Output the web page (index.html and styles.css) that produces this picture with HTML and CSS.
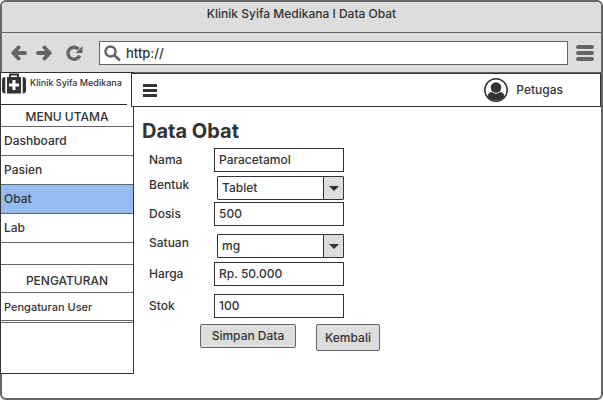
FILE: index.html
```html
<!DOCTYPE html>
<html lang="id">
<head>
<meta charset="utf-8">
<title>Klinik Syifa Medikana I Data Obat</title>
<link rel="stylesheet" href="styles.css">
</head>
<body>
<div class="browser">
  <header class="titlebar">Klinik Syifa Medikana I Data Obat</header>
  <div class="toolbar">
    <button class="tool" aria-label="Back"><svg width="16" height="16" viewBox="0 0 16 16"><path d="M7.500 2.500 2.500 8l5 5.500M3 8h11" fill="none" stroke="#666" stroke-width="4" stroke-linecap="round" stroke-linejoin="miter"/></svg></button>
    <button class="tool forward" aria-label="Forward"><svg width="16" height="16" viewBox="0 0 16 16"><path d="m8.500 2.500 5 5.500-5 5.500M13 8H2" fill="none" stroke="#666" stroke-width="4" stroke-linecap="round" stroke-linejoin="miter"/></svg></button>
    <button class="tool reload" aria-label="Reload"><svg width="17" height="16" viewBox="0 0 17 16"><path d="M12.500 4.200A6 6 0 1 0 13.600 10.500" fill="none" stroke="#666" stroke-width="3.400"/><path d="M16.500 1v7h-7z" fill="#666"/></svg></button>
    <div class="address">
      <svg width="17" height="16" viewBox="0 0 17 16"><circle cx="6.500" cy="6.500" r="5" fill="none" stroke="#666" stroke-width="2.500"/><path d="m10.500 10.500 4.500 4" stroke="#666" stroke-width="3" stroke-linecap="round"/></svg>
      <input type="text" value="http://" aria-label="Address">
    </div>
    <button class="tool" aria-label="Browser menu"><svg width="18" height="18" viewBox="0 0 18 18"><path d="M2 3h14M2 9h14M2 15h14" stroke="#666" stroke-width="4" stroke-linecap="round"/></svg></button>
  </div>
  <div class="page">
    <aside class="sidebar">
      <div class="brand">
        <svg width="24" height="22" viewBox="0 0 24 22"><path d="M8 5V1.500h8V5" fill="none" stroke="#333" stroke-width="2"/><path d="M5 4h14v16.500H5zM3.300 4v16.500H3a3 3 0 0 1-3-3V7a3 3 0 0 1 3-3zM20.700 4v16.500h.3a3 3 0 0 0 3-3V7a3 3 0 0 0-3-3z" fill="#333"/><path d="M10.500 7h3v3.500H17v3h-3.500V17h-3v-3.500H7v-3h3.500z" fill="#fff"/></svg>
        <span>Klinik Syifa Medikana</span>
      </div>
      <nav>
        <h2>MENU UTAMA</h2>
        <a href="#">Dashboard</a>
        <a href="#">Pasien</a>
        <a href="#" class="active">Obat</a>
        <a href="#">Lab</a>
        <div class="spacer"></div>
        <h2 class="settings">PENGATURAN</h2>
        <a href="#" class="user-settings">Pengaturan User</a>
      </nav>
    </aside>
    <main>
      <div class="topbar">
        <button class="tool" aria-label="Menu"><svg width="14" height="13" viewBox="0 0 14 13"><path d="M0 1.500h14M0 6.500h14M0 11.500h14" stroke="#333" stroke-width="3"/></svg></button>
        <div class="account">
          <svg width="24" height="24" viewBox="0 0 24 24"><circle cx="12" cy="12" r="11.200" fill="#fff" stroke="#333" stroke-width="1.500"/><circle cx="12" cy="9.500" r="5.300" fill="#333"/><path d="M3.500 18.500c.5-3 2-4.500 4.500-4.500 2.500 2.200 5.500 2.200 8 0 2.500 0 4 1.500 4.500 4.500A11 11 0 0 1 3.500 18.500z" fill="#333"/></svg>
          <span>Petugas</span>
        </div>
      </div>
      <form>
        <h1>Data Obat</h1>
        <div class="fields">
          <label for="nama">Nama</label>
          <input id="nama" type="text" value="Paracetamol">
          <label for="bentuk" class="raised">Bentuk</label>
          <div class="select"><select id="bentuk"><option>Tablet</option></select></div>
          <label for="dosis">Dosis</label>
          <input id="dosis" type="text" value="500">
          <label for="satuan" class="raised">Satuan</label>
          <div class="select"><select id="satuan"><option>mg</option></select></div>
          <label for="harga">Harga</label>
          <input id="harga" type="text" value="Rp. 50.000">
          <label for="stok">Stok</label>
          <input id="stok" type="text" value="100">
        </div>
        <div class="actions">
          <button type="button" class="save">Simpan Data</button>
          <button type="button" class="back">Kembali</button>
        </div>
      </form>
    </main>
  </div>
</div>
</body>
</html>
```
FILE: styles.css
```css
* {
  box-sizing: border-box;
}

body {
  margin: 0;
  color: #333;
  font: 500 12px/16px Inter, "Open Sans", sans-serif;
}

button, input, select {
  margin: 0;
  color: inherit;
  font: inherit;
}

svg {
  display: block;
  flex: none;
}

.browser {
  display: flex;
  flex-direction: column;
  min-height: 100vh;
  border: 2px solid #666;
  border-radius: 6px;
  background: #fff;
}

.titlebar {
  height: 31px;
  padding-top: 4px;
  border-bottom: 1px solid #666;
  border-radius: 4px 4px 0 0;
  background: #ddd;
  text-align: center;
}

.toolbar {
  display: flex;
  align-items: center;
  height: 40px;
  padding: 0 7px 0 9px;
  border-bottom: 1px solid #666;
  background: #ddd;
}

.tool {
  padding: 0;
  border: 0;
  background: none;
}

.forward {
  margin-left: 9px;
}

.reload {
  margin-left: 14px;
}

.address {
  display: flex;
  flex: 1;
  align-items: center;
  gap: 5px;
  height: 24px;
  margin: 0 8px 0 16px;
  padding: 0 4px;
  border: 1px solid #666;
  background: #fff;
}

.address input {
  flex: 1;
  min-width: 0;
  padding: 0;
  border: 0;
  background: none;
  font-size: 13px;
}

.page {
  display: flex;
  align-items: flex-start;
  margin: -1px 0 0 -2px;
}

.sidebar {
  width: 134px;
  min-height: 302px;
  flex: none;
  border: 1px solid #333;
  background: #fff;
}

.brand {
  display: flex;
  gap: 4px;
  height: 32px;
  margin-right: 6px;
  padding-left: 1px;
  border-bottom: 1px solid #333;
  font-size: 9px;
  line-height: 20px;
  white-space: nowrap;
}

.sidebar h2 {
  height: 22px;
  margin: 0;
  border-bottom: 1px solid #666;
  font-size: 12px;
  font-weight: 500;
  line-height: 24px;
  text-align: center;
}

.sidebar a {
  display: block;
  height: 29px;
  padding-left: 3px;
  border-bottom: 1px solid #666;
  color: inherit;
  line-height: 28px;
  text-decoration: none;
}

.sidebar .active {
  background: #94bbf2;
}

.spacer {
  height: 22px;
  border-bottom: 1px solid #666;
}

.sidebar .settings {
  height: 28px;
  line-height: 31px;
}

.sidebar .user-settings {
  height: 30px;
  border-bottom: 3px double #666;
  font-size: 11px;
}

main {
  flex: 1;
  min-width: 0;
}

.topbar {
  display: flex;
  align-items: center;
  justify-content: space-between;
  height: 34px;
  margin: 1px 0 0 -3px;
  padding: 0 37px 0 11px;
  border: 1px solid #333;
  background: #fff;
}

.account {
  display: flex;
  align-items: center;
  gap: 8px;
}

form {
  padding: 12px 8px 0;
}

h1 {
  margin: 0 0 5px;
  font-size: 20px;
  font-weight: 700;
  line-height: 24px;
}

.fields {
  display: grid;
  grid-template-columns: 65px 130px;
  grid-template-rows: 28px 26px 32px 28px 32px 24px;
  align-items: start;
  padding-left: 7px;
}

.fields label {
  line-height: 24px;
}

.fields .raised {
  line-height: 18px;
}

.fields input {
  width: 100%;
  height: 24px;
  padding: 0 4px 2px;
  border: 1px solid #333;
  background: #fff;
}

.select {
  position: relative;
  margin-left: 3px;
}

.select::before {
  content: "";
  position: absolute;
  top: 1px;
  right: 1px;
  bottom: 1px;
  width: 19px;
  border-left: 1px solid #333;
  background: #ddd;
  pointer-events: none;
}

.select::after {
  content: "";
  position: absolute;
  top: 10px;
  right: 5px;
  border: 5px solid transparent;
  border-top-color: #333;
  border-bottom: 0;
  pointer-events: none;
}

.select select {
  display: block;
  width: 100%;
  height: 24px;
  padding: 0 20px 0 4px;
  border: 1px solid #333;
  border-radius: 1px;
  background: #fff;
  appearance: none;
}

.actions {
  display: flex;
  align-items: flex-start;
  gap: 20px;
  padding: 6px 0 0 58px;
}

.actions button {
  height: 24px;
  padding: 0;
  border: 1px solid #666;
  border-radius: 2px;
  background: #ddd;
}

.actions .save {
  width: 96px;
}

.actions .back {
  width: 64px;
  height: 27px;
}
```
